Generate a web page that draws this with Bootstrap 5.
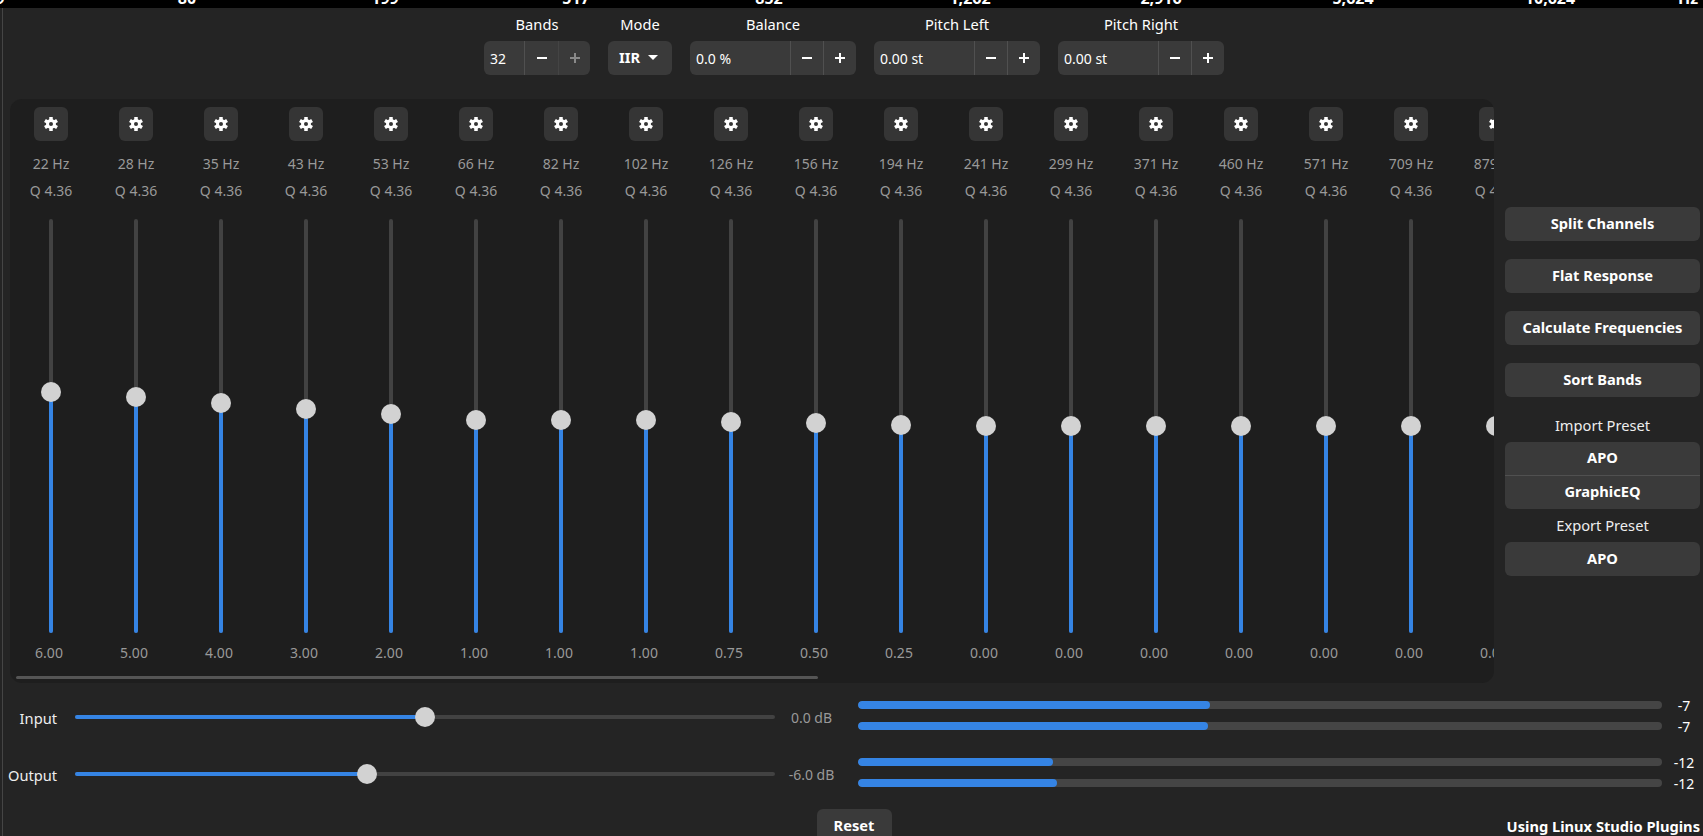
<!doctype html>
<html lang="en">
<head>
<meta charset="utf-8">
<title>Equalizer</title>
<link href="https://cdn.jsdelivr.net/npm/bootstrap@5.3.0/dist/css/bootstrap.min.css" rel="stylesheet">
<style>
html,body{height:836px;overflow:hidden}
body{background:#242424;color:#fff;font-family:"Noto Sans",sans-serif;font-size:14.67px;line-height:20px}
.axis-strip{position:relative;height:8px;background:#000;overflow:hidden;font-weight:700;color:#fff;font-size:16px}
.axis-strip span{position:absolute;bottom:3px;transform:translateX(-50%);white-space:nowrap;line-height:14px}
.page-wrap{margin-left:2px;border-left:1px solid #454545;padding:0 3px 0 5px;height:828px;overflow:hidden}
.head-row{padding-top:6px;gap:18px;margin-bottom:24px}
.head-label{text-align:center;margin-bottom:7px}
.spin{flex-wrap:nowrap;height:34px}
.spin-bands{width:106px}.spin-long{width:166px}
.spin .input-group-text{background:#3a3a3a;color:#fff;border:0;padding:0 0 0 6px;font-size:14px;flex:1 1 0;min-width:0;border-radius:6px 0 0 6px}
.tool-btn{--bs-btn-bg:#3a3a3a;--bs-btn-hover-bg:#444;--bs-btn-active-bg:#444;--bs-btn-disabled-bg:#3a3a3a;--bs-btn-color:#fff;--bs-btn-hover-color:#fff;--bs-btn-active-color:#fff;--bs-btn-disabled-color:#fff;--bs-btn-border-width:0;--bs-btn-font-size:14.67px;--bs-btn-font-weight:700;--bs-btn-line-height:20px;--bs-btn-border-radius:6px;--bs-btn-padding-x:0;--bs-btn-padding-y:6px;padding-bottom:8px;--bs-btn-disabled-opacity:1}
.spin .tool-btn{flex:0 0 33px;width:33px;height:34px;padding:0;display:flex;align-items:center;justify-content:center;border-left:1px solid #505050;margin-left:0!important}
.spin-bands .input-group-text{flex:0 0 40px}
.spin-bands .tool-btn:nth-child(2){flex-basis:34px}
.spin-bands .tool-btn:nth-child(3){flex-basis:32px;border-left-color:#444}
.spin svg{width:10px;height:10px;fill:#fff}
.spin .tool-btn:disabled svg{opacity:.4}
.mode-btn{height:34px;width:64px;display:flex;align-items:center;justify-content:center;padding-right:3px}
.mode-btn.dropdown-toggle::after{margin-left:8px;border-top-width:5px;border-left-width:5px;border-right-width:5px}
.eq-main{gap:11px;margin-left:2px}
.eq-panel{width:1484px;height:584px;flex:0 0 1484px;background:#1e1e1e;border-radius:12px;overflow:hidden;padding-bottom:3px}
.band-scroll{gap:3px;height:578px;overflow:hidden}
.band-col{flex:0 0 82px;width:82px;padding-top:8px;text-align:center;color:#999;font-size:14px}
.gear-btn{--bs-btn-bg:#353535;--bs-btn-hover-bg:#404040;width:34px;height:34px;padding:0;display:flex;align-items:center;justify-content:center}
.gear-btn svg{width:14px;height:14px}
.hz-label{margin-top:13px;white-space:nowrap}
.q-label{margin-top:7px;white-space:nowrap}
.v-slider{position:relative;width:4px;height:414px;margin-top:18px;background:#424242;border-radius:2px}
.v-fill{position:absolute;left:0;right:0;bottom:0;background:#3584e4;border-radius:0 0 2px 2px}
.knob{position:absolute;width:20px;height:20px;border-radius:50%;background:#d2d2d2}
.v-slider .knob{left:-8px;transform:translateY(-50%)}
.val-label{margin-top:10px;padding-right:4px;white-space:nowrap}
.panel-scrollbar{height:3px;width:802px;margin:-1px 0 0 6px;border-radius:2px;background:#555}
.side-col{width:195px;flex:0 0 195px;align-self:center}
.side-col .tool-btn{height:34px}
.side-gap{margin-bottom:18px}
.side-label{text-align:center;color:#eee;line-height:22px}
.side-label-a{margin-top:17px;margin-bottom:6px}
.side-label-b{margin-top:5px;margin-bottom:6px}
.linked .tool-btn{height:33px;padding-top:5px;padding-bottom:7px}
.linked .tool-btn+.tool-btn{margin-top:0!important;height:34px;border-top:1px solid #505050}
.io-strip{margin-top:18px;gap:10px}
.io-left{width:840px;flex:0 0 840px;padding-top:1.5px;gap:28px}
.io-row{height:29px;align-items:center}
.io-name{width:49px;flex:0 0 49px;text-align:right;color:#eee;padding-top:2px}
.h-slider{position:relative;margin-left:18px;width:700px;flex:0 0 700px;height:4px;background:#424242;border-radius:2px}
.h-fill{position:absolute;left:0;top:0;bottom:0;background:#3584e4;border-radius:2px 0 0 2px}
.h-slider .knob{top:-8px;transform:translateX(-50%)}
.io-val{width:73px;flex:0 0 73px;text-align:center;color:#999;white-space:nowrap;font-size:14px;padding-top:2px}
.io-right{flex:1 1 0;gap:28px}
.meter-group{height:29px;gap:13px}
.meter-row{height:8px;gap:6px;align-items:center}
.meter-bar{--bs-progress-height:8px;--bs-progress-bg:#454545;--bs-progress-bar-bg:#3584e4;--bs-progress-border-radius:4px;width:804px;flex:0 0 804px}
.meter-bar .progress-bar{border-radius:4px}
.meter-num{width:32px;text-align:center;line-height:8px;margin-top:2px;font-size:14px}
.foot-row{display:grid;grid-template-columns:1fr auto 1fr;align-items:center;margin-top:20.5px}
.reset-btn{width:75px;height:34px}
.credit{text-align:right;font-weight:700}
</style>
</head>
<body>
<svg width="0" height="0" class="d-none" aria-hidden="true">
  <symbol id="ico-gear" viewBox="0 0 16 16"><g fill="#fff"><circle cx="8" cy="8" r="4" fill="none" stroke="#fff" stroke-width="3.4"/><rect x="6" y="0" width="4" height="3.5"/><rect x="6" y="12.5" width="4" height="3.5"/><rect x="6" y="0" width="4" height="3.5" transform="rotate(60 8 8)"/><rect x="6" y="0" width="4" height="3.5" transform="rotate(120 8 8)"/><rect x="6" y="0" width="4" height="3.5" transform="rotate(240 8 8)"/><rect x="6" y="0" width="4" height="3.5" transform="rotate(300 8 8)"/></g></symbol>
  <symbol id="ico-minus" viewBox="0 0 10 10"><rect x="0" y="4" width="10" height="2"/></symbol>
  <symbol id="ico-plus" viewBox="0 0 10 10"><rect x="0" y="4" width="10" height="2"/><rect x="4" y="0" width="2" height="10"/></symbol>
</svg>

<div class="axis-strip">
  <span style="left:0px">9</span><span style="left:187px">80</span><span style="left:385px">199</span><span style="left:576px">517</span><span style="left:769px">852</span><span style="left:970px">1,262</span><span style="left:1161px">2,916</span><span style="left:1353px">5,624</span><span style="left:1550px">10,624</span><span style="left:1688px">Hz</span>
</div>

<div class="page-wrap">
  <div class="head-row d-flex justify-content-center">
    <div>
      <div class="head-label">Bands</div>
      <div class="input-group spin spin-bands"><span class="input-group-text">32</span><button class="btn tool-btn" type="button"><svg><use href="#ico-minus"/></svg></button><button class="btn tool-btn" type="button" disabled><svg><use href="#ico-plus"/></svg></button></div>
    </div>
    <div>
      <div class="head-label">Mode</div>
      <button class="btn tool-btn mode-btn dropdown-toggle" type="button">IIR</button>
    </div>
    <div>
      <div class="head-label">Balance</div>
      <div class="input-group spin spin-long"><span class="input-group-text">0.0 %</span><button class="btn tool-btn" type="button"><svg><use href="#ico-minus"/></svg></button><button class="btn tool-btn" type="button"><svg><use href="#ico-plus"/></svg></button></div>
    </div>
    <div>
      <div class="head-label">Pitch Left</div>
      <div class="input-group spin spin-long"><span class="input-group-text">0.00 st</span><button class="btn tool-btn" type="button"><svg><use href="#ico-minus"/></svg></button><button class="btn tool-btn" type="button"><svg><use href="#ico-plus"/></svg></button></div>
    </div>
    <div>
      <div class="head-label">Pitch Right</div>
      <div class="input-group spin spin-long"><span class="input-group-text">0.00 st</span><button class="btn tool-btn" type="button"><svg><use href="#ico-minus"/></svg></button><button class="btn tool-btn" type="button"><svg><use href="#ico-plus"/></svg></button></div>
    </div>
  </div>

  <div class="eq-main d-flex">
    <div class="eq-panel">
      <div class="band-scroll d-flex">
        <div class="band-col d-flex flex-column align-items-center"><button class="btn tool-btn gear-btn" type="button"><svg><use href="#ico-gear"/></svg></button><div class="hz-label">22 Hz</div><div class="q-label">Q 4.36</div><div class="v-slider"><div class="v-fill" style="height:58.33%"></div><div class="knob" style="top:41.67%"></div></div><div class="val-label">6.00</div></div>
        <div class="band-col d-flex flex-column align-items-center"><button class="btn tool-btn gear-btn" type="button"><svg><use href="#ico-gear"/></svg></button><div class="hz-label">28 Hz</div><div class="q-label">Q 4.36</div><div class="v-slider"><div class="v-fill" style="height:56.94%"></div><div class="knob" style="top:43.06%"></div></div><div class="val-label">5.00</div></div>
        <div class="band-col d-flex flex-column align-items-center"><button class="btn tool-btn gear-btn" type="button"><svg><use href="#ico-gear"/></svg></button><div class="hz-label">35 Hz</div><div class="q-label">Q 4.36</div><div class="v-slider"><div class="v-fill" style="height:55.56%"></div><div class="knob" style="top:44.44%"></div></div><div class="val-label">4.00</div></div>
        <div class="band-col d-flex flex-column align-items-center"><button class="btn tool-btn gear-btn" type="button"><svg><use href="#ico-gear"/></svg></button><div class="hz-label">43 Hz</div><div class="q-label">Q 4.36</div><div class="v-slider"><div class="v-fill" style="height:54.17%"></div><div class="knob" style="top:45.83%"></div></div><div class="val-label">3.00</div></div>
        <div class="band-col d-flex flex-column align-items-center"><button class="btn tool-btn gear-btn" type="button"><svg><use href="#ico-gear"/></svg></button><div class="hz-label">53 Hz</div><div class="q-label">Q 4.36</div><div class="v-slider"><div class="v-fill" style="height:52.78%"></div><div class="knob" style="top:47.22%"></div></div><div class="val-label">2.00</div></div>
        <div class="band-col d-flex flex-column align-items-center"><button class="btn tool-btn gear-btn" type="button"><svg><use href="#ico-gear"/></svg></button><div class="hz-label">66 Hz</div><div class="q-label">Q 4.36</div><div class="v-slider"><div class="v-fill" style="height:51.39%"></div><div class="knob" style="top:48.61%"></div></div><div class="val-label">1.00</div></div>
        <div class="band-col d-flex flex-column align-items-center"><button class="btn tool-btn gear-btn" type="button"><svg><use href="#ico-gear"/></svg></button><div class="hz-label">82 Hz</div><div class="q-label">Q 4.36</div><div class="v-slider"><div class="v-fill" style="height:51.39%"></div><div class="knob" style="top:48.61%"></div></div><div class="val-label">1.00</div></div>
        <div class="band-col d-flex flex-column align-items-center"><button class="btn tool-btn gear-btn" type="button"><svg><use href="#ico-gear"/></svg></button><div class="hz-label">102 Hz</div><div class="q-label">Q 4.36</div><div class="v-slider"><div class="v-fill" style="height:51.39%"></div><div class="knob" style="top:48.61%"></div></div><div class="val-label">1.00</div></div>
        <div class="band-col d-flex flex-column align-items-center"><button class="btn tool-btn gear-btn" type="button"><svg><use href="#ico-gear"/></svg></button><div class="hz-label">126 Hz</div><div class="q-label">Q 4.36</div><div class="v-slider"><div class="v-fill" style="height:51.04%"></div><div class="knob" style="top:48.96%"></div></div><div class="val-label">0.75</div></div>
        <div class="band-col d-flex flex-column align-items-center"><button class="btn tool-btn gear-btn" type="button"><svg><use href="#ico-gear"/></svg></button><div class="hz-label">156 Hz</div><div class="q-label">Q 4.36</div><div class="v-slider"><div class="v-fill" style="height:50.69%"></div><div class="knob" style="top:49.31%"></div></div><div class="val-label">0.50</div></div>
        <div class="band-col d-flex flex-column align-items-center"><button class="btn tool-btn gear-btn" type="button"><svg><use href="#ico-gear"/></svg></button><div class="hz-label">194 Hz</div><div class="q-label">Q 4.36</div><div class="v-slider"><div class="v-fill" style="height:50.35%"></div><div class="knob" style="top:49.65%"></div></div><div class="val-label">0.25</div></div>
        <div class="band-col d-flex flex-column align-items-center"><button class="btn tool-btn gear-btn" type="button"><svg><use href="#ico-gear"/></svg></button><div class="hz-label">241 Hz</div><div class="q-label">Q 4.36</div><div class="v-slider"><div class="v-fill" style="height:50%"></div><div class="knob" style="top:50%"></div></div><div class="val-label">0.00</div></div>
        <div class="band-col d-flex flex-column align-items-center"><button class="btn tool-btn gear-btn" type="button"><svg><use href="#ico-gear"/></svg></button><div class="hz-label">299 Hz</div><div class="q-label">Q 4.36</div><div class="v-slider"><div class="v-fill" style="height:50%"></div><div class="knob" style="top:50%"></div></div><div class="val-label">0.00</div></div>
        <div class="band-col d-flex flex-column align-items-center"><button class="btn tool-btn gear-btn" type="button"><svg><use href="#ico-gear"/></svg></button><div class="hz-label">371 Hz</div><div class="q-label">Q 4.36</div><div class="v-slider"><div class="v-fill" style="height:50%"></div><div class="knob" style="top:50%"></div></div><div class="val-label">0.00</div></div>
        <div class="band-col d-flex flex-column align-items-center"><button class="btn tool-btn gear-btn" type="button"><svg><use href="#ico-gear"/></svg></button><div class="hz-label">460 Hz</div><div class="q-label">Q 4.36</div><div class="v-slider"><div class="v-fill" style="height:50%"></div><div class="knob" style="top:50%"></div></div><div class="val-label">0.00</div></div>
        <div class="band-col d-flex flex-column align-items-center"><button class="btn tool-btn gear-btn" type="button"><svg><use href="#ico-gear"/></svg></button><div class="hz-label">571 Hz</div><div class="q-label">Q 4.36</div><div class="v-slider"><div class="v-fill" style="height:50%"></div><div class="knob" style="top:50%"></div></div><div class="val-label">0.00</div></div>
        <div class="band-col d-flex flex-column align-items-center"><button class="btn tool-btn gear-btn" type="button"><svg><use href="#ico-gear"/></svg></button><div class="hz-label">709 Hz</div><div class="q-label">Q 4.36</div><div class="v-slider"><div class="v-fill" style="height:50%"></div><div class="knob" style="top:50%"></div></div><div class="val-label">0.00</div></div>
        <div class="band-col d-flex flex-column align-items-center"><button class="btn tool-btn gear-btn" type="button"><svg><use href="#ico-gear"/></svg></button><div class="hz-label">879 Hz</div><div class="q-label">Q 4.36</div><div class="v-slider"><div class="v-fill" style="height:50%"></div><div class="knob" style="top:50%"></div></div><div class="val-label">0.00</div></div>
      </div>
      <div class="panel-scrollbar"></div>
    </div>
    <div class="side-col d-flex flex-column">
      <button class="btn tool-btn side-gap" type="button">Split Channels</button>
      <button class="btn tool-btn side-gap" type="button">Flat Response</button>
      <button class="btn tool-btn side-gap" type="button">Calculate Frequencies</button>
      <button class="btn tool-btn" type="button">Sort Bands</button>
      <div class="side-label side-label-a">Import Preset</div>
      <div class="btn-group-vertical linked">
        <button class="btn tool-btn" type="button">APO</button>
        <button class="btn tool-btn" type="button">GraphicEQ</button>
      </div>
      <div class="side-label side-label-b">Export Preset</div>
      <button class="btn tool-btn" type="button">APO</button>
    </div>
  </div>

  <div class="io-strip d-flex">
    <div class="io-left d-flex flex-column">
      <div class="io-row d-flex"><div class="io-name">Input</div><div class="h-slider"><div class="h-fill" style="width:50%"></div><div class="knob" style="left:50%"></div></div><div class="io-val">0.0 dB</div></div>
      <div class="io-row d-flex"><div class="io-name">Output</div><div class="h-slider"><div class="h-fill" style="width:41.67%"></div><div class="knob" style="left:41.67%"></div></div><div class="io-val">-6.0 dB</div></div>
    </div>
    <div class="io-right d-flex flex-column">
      <div class="meter-group d-flex flex-column">
        <div class="meter-row d-flex"><div class="progress meter-bar"><div class="progress-bar" style="width:43.8%"></div></div><div class="meter-num">-7</div></div>
        <div class="meter-row d-flex"><div class="progress meter-bar"><div class="progress-bar" style="width:43.5%"></div></div><div class="meter-num">-7</div></div>
      </div>
      <div class="meter-group d-flex flex-column">
        <div class="meter-row d-flex"><div class="progress meter-bar"><div class="progress-bar" style="width:24.3%"></div></div><div class="meter-num">-12</div></div>
        <div class="meter-row d-flex"><div class="progress meter-bar"><div class="progress-bar" style="width:24.8%"></div></div><div class="meter-num">-12</div></div>
      </div>
    </div>
  </div>

  <div class="foot-row">
    <div></div>
    <button class="btn tool-btn reset-btn" type="button">Reset</button>
    <div class="credit">Using Linux Studio Plugins</div>
  </div>
</div>
<script src="https://cdn.jsdelivr.net/npm/bootstrap@5.3.0/dist/js/bootstrap.bundle.min.js"></script>
</body>
</html>
